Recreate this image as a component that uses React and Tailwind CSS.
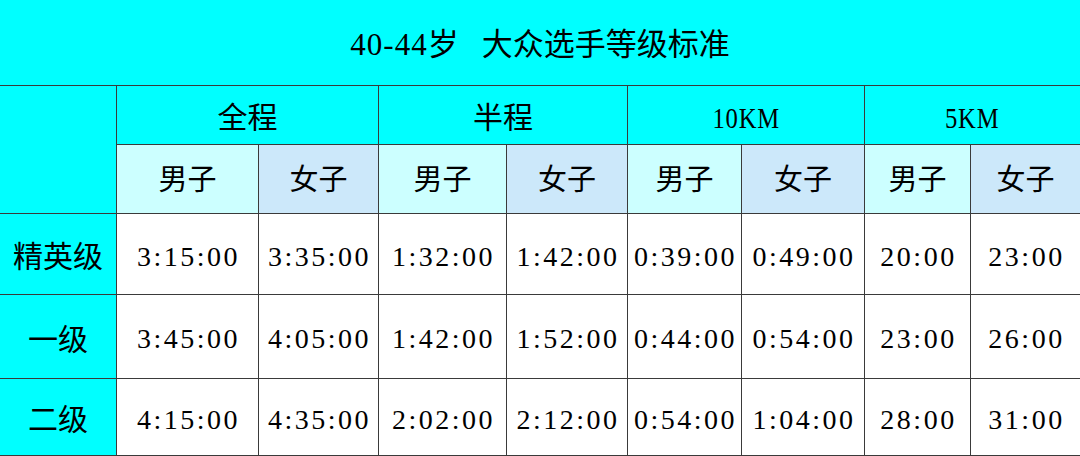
const groups = ["全程", "半程", "10KM", "5KM"];

const rows = [
  { label: "精英级", times: ["3:15:00", "3:35:00", "1:32:00", "1:42:00", "0:39:00", "0:49:00", "20:00", "23:00"] },
  { label: "一级", times: ["3:45:00", "4:05:00", "1:42:00", "1:52:00", "0:44:00", "0:54:00", "23:00", "26:00"] },
  { label: "二级", times: ["4:15:00", "4:35:00", "2:02:00", "2:12:00", "0:54:00", "1:04:00", "28:00", "31:00"] },
];

const font = "font-['Liberation_Serif','Noto_Sans_CJK_SC',serif]";

export default function App() {
  return (
    <div className={`w-[1080px] h-[456px] bg-white text-black ${font}`}>
      <div className="grid grid-cols-[116px_141px_119px_127px_120px_113px_122px_105px_109px] grid-rows-[85px_58px_68px_80px_83px_76px] gap-px bg-[#3a3a3a] pb-px">
        <div className="col-span-9 bg-[#00ffff] flex items-center justify-center text-[31px] pt-[6px]">
          <span className="tracking-[1px]">40-44岁</span>
          <span className="ml-[22px]">大众选手等级标准</span>
        </div>

        <div className="row-span-2 bg-[#00ffff]"></div>
        {groups.map((g) => (
          <div key={g} className="col-span-2 bg-[#00ffff] flex items-center justify-center pt-1 text-[30px]">
            {g.includes("KM") ? (
              <span className="inline-block scale-x-[0.82] tracking-[1px]">{g}</span>
            ) : (
              g
            )}
          </div>
        ))}

        {groups.map((g) => [
          <div key={g + "m"} className="bg-[#ccffff] flex items-center justify-center text-[29px] pt-1">
            男子
          </div>,
          <div key={g + "f"} className="bg-[#cce8fa] flex items-center justify-center text-[29px] pt-1">
            女子
          </div>,
        ])}

        {rows.map((r) => [
          <div key={r.label} className="bg-[#00ffff] flex items-center justify-center text-[30px] pt-[5px]">
            {r.label}
          </div>,
          ...r.times.map((t, i) => (
            <div key={r.label + i} className="bg-white flex items-center justify-center text-[28px] tracking-[2.5px] pt-[5px] pl-[2px]">
              {t}
            </div>
          )),
        ])}
      </div>
    </div>
  );
}
